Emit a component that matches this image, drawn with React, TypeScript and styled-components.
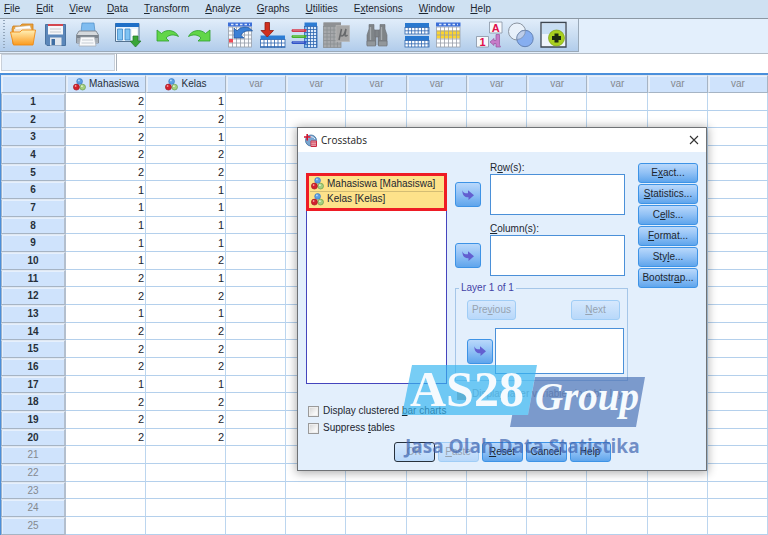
import React from 'react';
import styled, { createGlobalStyle, css } from 'styled-components';

const GlobalStyle = createGlobalStyle`
  *, *::before, *::after { box-sizing: border-box; }
  html, body, #root { height: 100%; }
  body { margin: 0; overflow: hidden; font: 10px/12px "Liberation Sans", Arial, sans-serif; color: #1c2630; }
  button, input { font: inherit; color: inherit; margin: 0; padding: 0; }
`;

/* ---------- shell ---------- */

const Window = styled.div`
  position: relative;
  display: flex;
  flex-direction: column;
  min-height: 100vh;
  background: #fff;
`;

const MenuBar = styled.nav`
  display: flex;
  gap: 16px;
  height: 19px;
  padding: 2px 4px;
  background: #cfe1f2;
  border-bottom: 1px solid #8c98a4;
`;

const MenuItem = styled.button`
  border: 0;
  background: none;
  line-height: 14px;
  white-space: nowrap;
`;

const ToolStrip = styled.div`
  height: 35px;
  display: flex;
  align-items: flex-start;
  background: #e3effc;
  border-bottom: 1px solid #b4bdc7;
`;

const ToolBar = styled.div`
  display: flex;
  align-items: center;
  gap: 14px;
  height: 33px;
  padding: 0 14px 0 3px;
  background: linear-gradient(#e1edfa, #c8dcf1 55%, #b1cceb);
  border-right: 1px solid #9aa9b8;
  border-bottom: 1px solid #9aa9b8;
`;

const Grip = styled.span`
  width: 2px;
  height: 30px;
  margin-right: -9px;
  background: repeating-linear-gradient(#93a6bb 0 1px, transparent 1px 3px);
`;

const ToolGroup = styled.div`
  display: flex;
  gap: 6px;
`;

const ToolButton = styled.button`
  width: 26px;
  height: 26px;
  border: 0;
  background: none;
  svg { display: block; overflow: visible; }
`;

const EditBar = styled.div`
  display: flex;
  height: 21px;
  background: #fff;
  border-bottom: 2px solid #4a8fdb;
`;

const CellName = styled.output`
  width: 114px;
  margin: 0 0 2px 1px;
  background: #e3effc;
  border: 1px solid #c9d0d9;
`;

const CellEditor = styled.input`
  flex: 1;
  min-width: 0;
  margin: 0 0 2px 1px;
  border: 0;
  border-left: 1px solid #a9b1ba;
  background: #fff;
  outline: none;
`;

/* ---------- data sheet ---------- */

const SheetArea = styled.main`
  flex: 1;
  display: flex;
  border-left: 1px solid #4a8fdb;
`;

const Sheet = styled.table`
  flex: 1;
  width: 100%;
  table-layout: fixed;
  border-collapse: separate;
  border-spacing: 0;
`;

const Col = styled.col<{ $w?: number }>`
  ${p => p.$w && css`width: ${p.$w}px;`}
`;

const headCell = css`
  padding: 0;
  background: #cfe3fc;
  border: 1px solid #a6b4c4;
  border-top-color: #e0e8f2;
  box-shadow: inset 1px 1px 0 #e6f0fd;
  white-space: nowrap;
`;

const ColHead = styled.th<{ $named?: boolean }>`
  ${headCell}
  height: 18px;
  border-left: 1px solid #e4ebf4;
  font-weight: 400;
  color: ${p => (p.$named ? '#27303a' : '#85898f')};
`;

const HeadLabel = styled.span`
  display: flex;
  align-items: center;
  justify-content: center;
  gap: 3px;
`;

const RowHead = styled.th<{ $used: boolean }>`
  ${headCell}
  height: 17px;
  border-left-color: #9fb4cc;
  border-right: 2px solid #b3bfce;
  font-weight: ${p => (p.$used ? 700 : 400)};
  color: ${p => (p.$used ? '#27303a' : '#85898f')};
  line-height: 14px;
`;

const Cell = styled.td`
  padding: 0 1px 0 0;
  border-right: 1px solid #bcd6ef;
  border-bottom: 1px solid #b4d0ec;
  text-align: right;
  font-size: 11px;
  line-height: 14px;
`;

/* ---------- dialog ---------- */

const Dialog = styled.section`
  position: absolute;
  left: 297px;
  top: 127px;
  width: 410px;
  border: 1px solid #6f7275;
  background: #e3effc;
  box-shadow: 0 1px 9px 1px rgba(0, 0, 0, 0.32);
`;

const TitleBar = styled.header`
  display: flex;
  align-items: center;
  gap: 4px;
  height: 24px;
  padding: 0 7px 0 6px;
  background: #fff;
`;

const Title = styled.h1`
  flex: 1;
  margin: 0;
  font: 400 10px/14px "Open Sans", "Noto Sans", sans-serif;
  color: #222;
`;

const CloseButton = styled.button`
  width: 10px;
  height: 10px;
  border: 0;
  background: none;
  svg { display: block; }
`;

const DialogBody = styled.div`
  display: flex;
  padding: 10px 8px 0;
`;

const SourceColumn = styled.div`
  width: 142px;
  margin: 11px 8px 0 0;
`;

const SourceList = styled.ul`
  height: 211px;
  margin: 0 0 21px;
  padding: 0;
  list-style: none;
  background: #fff;
  border: 1px solid #4545bd;
`;

const Highlight = styled.li`
  margin: -1px;
  border: 3px solid #ee1c25;
  background: #fde28a;
`;

const Group = styled.ul`
  margin: 0;
  padding: 0 1px 2px;
  list-style: none;
`;

const SourceItem = styled.li`
  display: flex;
  align-items: center;
  gap: 3px;
  height: 15px;
  padding-left: 1px;
  white-space: nowrap;
  & + & { border-top: 1px solid #d3bd74; }
`;

const CheckRow = styled.label<{ $disabled?: boolean }>`
  display: flex;
  align-items: center;
  gap: 4px;
  height: 12px;
  margin: 0 0 5px 2px;
  white-space: nowrap;
  color: ${p => (p.$disabled ? '#97a3b0' : 'inherit')};
`;

const CheckBox = styled.input.attrs({ type: 'checkbox' })`
  appearance: none;
  flex: none;
  width: 11px;
  height: 11px;
  border: 1px solid #9a9a9a;
  background: linear-gradient(135deg, #d2d2d2, #f8f8f8 70%);
  box-shadow: inset 0 0 0 1px #eee;
  &:disabled { background: #a9a49c; border-color: #a5a5a5; box-shadow: none; }
`;

const TargetColumn = styled.div`
  width: 173px;
  margin-right: 10px;
`;

const Target = styled.div`
  display: grid;
  grid-template: 12px 41px / 26px 135px;
  column-gap: 9px;
  align-items: center;
  margin-bottom: 8px;
`;

const TargetLabel = styled.span`
  grid-column: 2;
`;

const DropList = styled.ul`
  align-self: stretch;
  flex: 1;
  margin: 0;
  padding: 0;
  list-style: none;
  background: #fff;
  border: 1px solid #4b90d8;
`;

const PushButton = styled.button<{ $w: number }>`
  width: ${p => p.$w}px;
  height: 20px;
  border: 1px solid #3d93e6;
  border-radius: 3px;
  background: linear-gradient(#b9d8fb, #8fc0f5 50%, #5fa5ec);
  line-height: 12px;
  white-space: nowrap;
  &:disabled {
    border-color: #a0cdf6;
    background: linear-gradient(#d6e8fd, #b8d8fa);
    color: #97a3b0;
  }
`;

const DefaultButton = styled(PushButton)`
  &:disabled { border: 1px solid #27313c; }
`;

const MoveButton = styled.button`
  display: grid;
  place-items: center;
  flex: none;
  width: 26px;
  height: 25px;
  border: 1px solid #3d93e6;
  border-radius: 3px;
  background: linear-gradient(#b9d8fb, #8fc0f5 50%, #5fa5ec);
`;

const Layer = styled.fieldset`
  min-width: 0;
  margin: -2px 0 7px;
  padding: 6px 3px 6px 11px;
  border: 1px solid #a5c6e8;
`;

const Legend = styled.legend`
  margin-left: -8px;
  padding: 0 2px;
  color: #4343a6;
`;

const LayerNav = styled.div`
  display: flex;
  justify-content: space-between;
  margin: 0 4px 8px 0;
`;

const LayerPick = styled.div`
  display: flex;
  align-items: center;
  gap: 2px;
  height: 46px;
`;

const SideButtons = styled.div`
  display: flex;
  flex-direction: column;
  gap: 1px;
  margin-top: 1px;
`;

const Footer = styled.footer`
  display: flex;
  justify-content: center;
  gap: 3px;
  padding: 3px 0 8px;
`;

const Watermark = styled.svg`
  position: absolute;
  left: 100px;
  top: 232px;
  overflow: visible;
  pointer-events: none;
`;

/* ---------- drawings ---------- */

const NominalIcon = () => (
  <svg width="13" height="13" viewBox="0 0 13 13" aria-hidden="true">
    <circle cx="6.6" cy="3.4" r="2.9" fill="#5c9fe2" stroke="#3576bd" strokeWidth=".6" />
    <circle cx="9.6" cy="9.1" r="2.9" fill="#a5cf80" stroke="#5d9443" strokeWidth=".6" />
    <circle cx="3.4" cy="9.1" r="3" fill="#d3202e" stroke="#981820" strokeWidth=".6" />
    <circle cx="2.6" cy="8" r=".9" fill="#f49a9c" />
    <circle cx="5.9" cy="2.4" r=".9" fill="#bcdcfa" />
    <circle cx="8.9" cy="8.2" r=".9" fill="#e0f4d0" />
  </svg>
);

const MoveArrow = () => (
  <svg width="14" height="14" viewBox="0 0 14 14" aria-hidden="true">
    <path d="M1.5 2.2C2 5 4 5.3 7 5.2V2.3L13 7.3L7.5 12V9.3C3.6 9.4 1 7 1.5 2.2Z" fill="#635fd0" />
  </svg>
);

const FolderIcon = () => (
  <g>
    <path d="M2 7L3 4H10L12 2H23V8L20 22H3Z" fill="#e9a23b" stroke="#cf7f1c" strokeWidth=".8" />
    <path d="M5 5L20 3.5L22 9H5Z" fill="#fff" stroke="#c0a780" strokeWidth=".5" />
    <path d="M4 7L21 6V12H4Z" fill="#f0e4d0" />
    <path d="M.5 10H10L12 8H25.5L23 23H3.5Z" fill="url(#folder)" stroke="#ee8a14" strokeWidth=".9" />
  </g>
);

const SaveIcon = () => (
  <g>
    <path d="M3.5 2.5H23.5V23.5H5L3.5 22Z" fill="#5b87ba" stroke="#4a729f" />
    <path d="M6 2.5H21V12.5H6Z" fill="#f5f7fa" />
    <path d="M6 2H21V4H6Z" fill="#d3474f" />
    <path d="M8 7H19M8 10H19" stroke="#c5cad0" />
    <path d="M8 15.5H19.5V23.5H8Z" fill="#e2e7ed" />
    <path d="M9.5 17H13V23H9.5Z" fill="#3f6ea3" />
  </g>
);

const PrintIcon = () => (
  <g>
    <path d="M8 1H20L21 10H7Z" fill="#7fbcf0" stroke="#4e8cc4" strokeWidth=".7" />
    <path d="M5 9H22L24.5 13V21H2.5V13Z" fill="#d5d9dd" stroke="#7d858e" strokeWidth=".9" />
    <path d="M3 13H24V16H3Z" fill="#7c848d" />
    <path d="M3 16H24V20H3Z" fill="#a6adb5" />
    <path d="M6.5 15H20.5L22 24H5Z" fill="#f8f9fb" stroke="#a0a8b0" strokeWidth=".7" />
    <path d="M8 18H19M7.5 21H19.5" stroke="#c5cbd2" />
  </g>
);

const RecallIcon = () => (
  <g>
    <path d="M1.5 1.5H25V19.5H1.5Z" fill="#e9f3fd" stroke="#54718f" />
    <path d="M1.5 1H25V5H1.5Z" fill="#1f6fc7" />
    <path d="M3.5 7H8.500V18H3.500ZM11 7H16V18H11Z" fill="#7fc3f3" stroke="#3d86c4" strokeWidth=".8" />
    <path d="M18 7H23V14H18Z" fill="#fff" />
    <path d="M19 14H24V19H27L21.5 25L16 19H19Z" fill="#3aa537" stroke="#23782a" strokeWidth=".7" />
  </g>
);

const UndoIcon = () => (
  <path d="M3 8V19H15L12 16C15 12.5 20 12 24.5 14.5C21.5 8 12.5 6.500 7.500 11.500Z" fill="#62d649" stroke="#2f9e2f" strokeWidth=".8" strokeLinejoin="round" />
);

const RedoIcon = () => (
  <path d="M24 8V19H12L15 16C12 12.5 7 12 2.5 14.5C5.500 8 14.500 6.500 19.500 11.500Z" fill="#62d649" stroke="#2f9e2f" strokeWidth=".8" strokeLinejoin="round" />
);

const GridLines = ({ x, y, w, h, s, c }: { x: number; y: number; w: number; h: number; s: number; c: string }) => (
  <g stroke={c} strokeWidth=".8">
    <rect x={x} y={y} width={w} height={h} fill="none" />
    {Array.from({ length: Math.ceil(w / s) - 1 }, (_, i) => (
      <path key={`v${i}`} d={`M${x + (i + 1) * s} ${y}V${y + h}`} />
    ))}
    {Array.from({ length: Math.ceil(h / s) - 1 }, (_, i) => (
      <path key={`h${i}`} d={`M${x} ${y + (i + 1) * s}H${x + w}`} />
    ))}
  </g>
);

const GoCaseIcon = () => (
  <g>
    <path d="M2.5 1H25.5V25H2.5Z" fill="#fbfcfe" />
    <GridLines x={2.5} y={5} w={23} h={20} s={4} c="#969da9" />
    <path d="M2 .5H26V4.5H2Z" fill="#3c6fd8" />
    <path d="M5 2.500H24" stroke="#dbe8fb" strokeWidth="1.500" strokeDasharray="2.500 2" />
    <path d="M3 17H7V20.500H3Z" fill="#f04a55" />
    <path d="M8 6V16H18L15 13.500C16.500 9.500 21 8 26.500 9C23 3.500 14.500 4 11 9Z" fill="#3a7fd5" stroke="#1c519c" strokeWidth=".7" strokeLinejoin="round" />
  </g>
);

const GoVarIcon = () => (
  <g>
    <path d="M2.500 14H27V25.500H2.500Z" fill="#fff" />
    <path d="M2.500 13.500H27V17.500H2.500Z" fill="#2c7cd4" />
    <GridLines x={2.500} y={17.500} w={24.500} h={8} s={3.500} c="#2d66b0" />
    <path d="M7 .5H11.500V8.500H15.500L9.300 15L3 8.500H7Z" fill="#d0301f" stroke="#8f1c12" strokeWidth=".8" />
  </g>
);

const VariablesIcon = () => (
  <g>
    <path d="M14.500 .5H27V25.500H14.500Z" fill="#dceafa" />
    <path d="M14.500 .5H27V4.500H14.500Z" fill="#2c7cd4" />
    <path d="M14.500 4.500H18V25.500H14.500Z" fill="#88bdf0" />
    <GridLines x={14.500} y={4.500} w={12.500} h={21} s={3} c="#2d66b0" />
    <g strokeWidth="3" strokeLinecap="round">
      <path d="M3 8.500H15" stroke="#cf3a50" />
      <path d="M3 14.500H15" stroke="#46b22c" />
      <path d="M3 20.500H15" stroke="#3154c8" />
    </g>
    <g stroke="#fff" strokeOpacity=".55" strokeWidth=".8">
      <path d="M3 8H14M3 14H14M3 20H14" />
    </g>
  </g>
);

const StatsIcon = () => (
  <g>
    <path d="M1.500 .5H19V25.500H1.500Z" fill="#a6a8ab" />
    <path d="M1.500 .5H19V4.500H1.500Z" fill="#8f9194" />
    <GridLines x={1.500} y={4.500} w={17.500} h={21} s={3.500} c="#8c8f92" />
    <path d="M14 3.500H27.500V19.500H14Z" fill="#a6a6a6" stroke="#b8b8b8" strokeWidth=".7" />
    <path d="M19.500 7L17 18M19.500 7C18 13 18.500 14 20 14C22 14 23 10.500 24 7L23 12.500C23 14.500 24 14.500 25.500 13" fill="none" stroke="#66686a" strokeWidth="1.500" />
  </g>
);

const FindIcon = () => (
  <g fill="#7f8488" stroke="#6c7175" strokeWidth=".6">
    <path d="M7 2.500H12V7L14 10V23H5V13L7 7Z" />
    <path d="M18 2.500H23V7L25 13V23H16V10L18 7Z" />
    <path d="M13 8H17V15H13Z" />
    <path d="M5 19H13.500V24H5ZM16.500 19H25V24H16.500Z" fill="#92979b" />
    <path d="M8.500 5V18M19.500 5V18" stroke="#a6abaf" strokeWidth="1.300" />
  </g>
);

const SplitIcon = () => (
  <g>
    {[1, 14].map(y => (
      <g key={y}>
        <path d={`M3 ${y}H27V${y + 11}H3Z`} fill="#fff" />
        <path d={`M3 ${y}H27V${y + 4.5}H3Z`} fill="#2878cf" />
        <GridLines x={3} y={y + 4.5} w={24} h={6.5} s={3.3} c="#2d66b0" />
      </g>
    ))}
  </g>
);

const SelectIcon = () => (
  <g>
    <path d="M2.500 1H26V25H2.500Z" fill="#fff" />
    <path d="M2.500 8.500H26V16.500H2.500Z" fill="#fbd42f" />
    <GridLines x={2.500} y={5} w={23.500} h={20} s={4} c="#9aa0aa" />
    <path d="M2 .5H26.500V4.500H2Z" fill="#3c6fd8" />
    <path d="M5 2.500H24" stroke="#dbe8fb" strokeWidth="1.500" strokeDasharray="2.500 2" />
  </g>
);

const tile = { fontFamily: '"Liberation Sans", sans-serif', fontWeight: 700, fontSize: 11, fill: '#e0104c', textAnchor: 'middle' as const };

const LabelsIcon = () => (
  <g>
    <path d="M15.500 0H28V11H15.500Z" fill="#f7f9fc" stroke="#8793a3" strokeWidth=".8" />
    <text x="21.800" y="9.500" {...tile}>A</text>
    <path d="M2.500 14.500H14.500V25H2.500Z" fill="#f7f9fc" stroke="#8793a3" strokeWidth=".8" />
    <text x="8.500" y="24" {...tile}>1</text>
    <path d="M22 12.500H25.500V22.500C25.500 24 26.500 24 26.500 25H22V21.500H20V23.500L16 20L20 16.500V18.500H22Z" fill="#c77cc9" stroke="#9a549c" strokeWidth=".7" />
  </g>
);

const SetsIcon = () => (
  <g>
    <circle cx="11" cy="9.500" r="8.500" fill="#eef4fb" fillOpacity=".8" stroke="#8b95a1" />
    <circle cx="19" cy="16.500" r="8.200" fill="#86aef0" stroke="#6382b5" />
    <path d="M10.800 17.500A8.200 8.200 0 0 1 19.300 8.400A8.500 8.500 0 0 1 10.800 17.500Z" fill="#bccdea" stroke="#7b8ca6" strokeWidth=".7" />
  </g>
);

const CustomIcon = () => (
  <g>
    <path d="M3 .5H28V25H3Z" fill="#eef4fb" stroke="#3c4650" strokeWidth="1.300" />
    <path d="M4 1.500H27V12H4Z" fill="#c8def3" />
    <circle cx="18.500" cy="16" r="8" fill="#a8cf1f" stroke="#7d9f18" strokeWidth=".7" />
    <path d="M16.500 11.500H20.500V14H23V18H20.500V20.500H16.500V18H14V14H16.500Z" fill="#1d2a12" />
  </g>
);

const AppIcon = () => (
  <svg width="13" height="13" viewBox="0 0 13 13" aria-hidden="true">
    <circle cx="7" cy="6.500" r="5.500" fill="#7aa5cf" stroke="#41719f" strokeWidth=".8" />
    <path d="M4 4Q8 1 11 5" stroke="#e5f0fa" fill="none" />
    <path d="M7 7H12.500V12.500H7Z" fill="#fff" stroke="#cb2a42" />
    <path d="M7 8.800H12.500M7 10.800H12.500M9 7V12.500M11 7V12.500" stroke="#cb2a42" strokeWidth=".7" />
    <path d="M0 3H6.500M3.200 0V6.500" stroke="#d0152f" strokeWidth="1.600" />
  </svg>
);

/* ---------- content ---------- */

const menus: [string, number][] = [
  ['File', 0], ['Edit', 0], ['View', 0], ['Data', 0], ['Transform', 0], ['Analyze', 0],
  ['Graphs', 0], ['Utilities', 0], ['Extensions', 1], ['Window', 0], ['Help', 0],
];

const tools: [string, () => React.JSX.Element][][] = [
  [['Open', FolderIcon], ['Save', SaveIcon], ['Print', PrintIcon]],
  [['Recall dialogs', RecallIcon]],
  [['Undo', UndoIcon], ['Redo', RedoIcon]],
  [['Go to case', GoCaseIcon], ['Go to variable', GoVarIcon], ['Variables', VariablesIcon], ['Statistics', StatsIcon]],
  [['Find', FindIcon]],
  [['Split file', SplitIcon], ['Select cases', SelectIcon]],
  [['Value labels', LabelsIcon], ['Variable sets', SetsIcon], ['Customize', CustomIcon]],
];

const data = [
  [2, 1], [2, 2], [2, 1], [2, 2], [2, 2], [1, 1], [1, 1], [1, 1], [1, 1], [1, 2],
  [2, 1], [2, 2], [1, 1], [2, 2], [2, 2], [2, 2], [1, 1], [2, 2], [2, 2], [2, 2],
];

const EMPTY_COLUMNS = 9;
const VISIBLE_ROWS = 25;
const blanks = Array.from({ length: EMPTY_COLUMNS }, (_, i) => i);

const sideActions: [string, number][] = [
  ['Exact...', 1], ['Statistics...', 0], ['Cells...', 1], ['Format...', 0], ['Style...', 3], ['Bootstrap...', 7],
];

const Mnemonic = ({ text, at }: { text: string; at: number }) => (
  <>{text.slice(0, at)}<u>{text[at]}</u>{text.slice(at + 1)}</>
);

const TargetField = ({ id, label, at }: { id: string; label: string; at: number }) => (
  <Target>
    <TargetLabel id={id}><Mnemonic text={label} at={at} /></TargetLabel>
    <MoveButton aria-label={`Move to ${label}`}><MoveArrow /></MoveButton>
    <DropList role="listbox" aria-labelledby={id} />
  </Target>
);

const CrosstabsDialog = () => (
  <Dialog role="dialog" aria-labelledby="dialog-title">
    <TitleBar>
      <AppIcon />
      <Title id="dialog-title">Crosstabs</Title>
      <CloseButton aria-label="Close">
        <svg width="10" height="10" viewBox="0 0 10 10"><path d="M1 1L9 9M9 1L1 9" stroke="#333" strokeWidth="1.100" /></svg>
      </CloseButton>
    </TitleBar>
    <DialogBody>
      <SourceColumn>
        <SourceList>
          <Highlight>
            <Group role="listbox" aria-label="Variables">
              <SourceItem role="option" aria-selected="true"><NominalIcon />Mahasiswa [Mahasiswa]</SourceItem>
              <SourceItem role="option" aria-selected="true"><NominalIcon />Kelas [Kelas]</SourceItem>
            </Group>
          </Highlight>
        </SourceList>
        <CheckRow><CheckBox /><span><Mnemonic text="Display clustered bar charts" at={18} /></span></CheckRow>
        <CheckRow><CheckBox /><span><Mnemonic text="Suppress tables" at={9} /></span></CheckRow>
      </SourceColumn>
      <TargetColumn>
        <TargetField id="rows" label="Row(s):" at={1} />
        <TargetField id="columns" label="Column(s):" at={0} />
        <Layer>
          <Legend>Layer 1 of 1</Legend>
          <LayerNav>
            <PushButton $w={49} disabled><Mnemonic text="Previous" at={3} /></PushButton>
            <PushButton $w={49} disabled><Mnemonic text="Next" at={0} /></PushButton>
          </LayerNav>
          <LayerPick>
            <MoveButton aria-label="Move to layer"><MoveArrow /></MoveButton>
            <DropList role="listbox" aria-label="Layer 1 of 1" />
          </LayerPick>
        </Layer>
        <CheckRow $disabled><CheckBox disabled /><span>Display layer variables in table layers</span></CheckRow>
      </TargetColumn>
      <SideButtons>
        {sideActions.map(([text, at]) => (
          <PushButton key={text} $w={60}><Mnemonic text={text} at={at} /></PushButton>
        ))}
      </SideButtons>
    </DialogBody>
    <Footer>
      <DefaultButton $w={41} disabled>OK</DefaultButton>
      <PushButton $w={41} disabled><Mnemonic text="Paste" at={0} /></PushButton>
      <PushButton $w={41}><Mnemonic text="Reset" at={0} /></PushButton>
      <PushButton $w={41}>Cancel</PushButton>
      <PushButton $w={41}>Help</PushButton>
    </Footer>
    <Watermark width="250" height="100" viewBox="0 0 250 100">
      <path d="M14 5H139L130 55H4Z" fill="#36b5f0" fillOpacity=".68" />
      <path d="M137 17H247L238 67H112L114.200 55H130Z" fill="#3c66ae" fillOpacity=".62" />
      <text x="12" y="46" fontFamily='"Liberation Serif", serif' fontWeight="700" fontSize="50" fill="#f5fafe">AS28</text>
      <text x="137" y="50" fontFamily='"Liberation Serif", serif' fontWeight="700" fontStyle="italic" fontSize="39" fill="#f5fafe">Group</text>
      <text x="7" y="93" fontFamily='"Open Sans", sans-serif' fontWeight="700" fontSize="19" fill="#3c62ae" fillOpacity=".7">Jasa Olah Data Statistika</text>
    </Watermark>
  </Dialog>
);

export default function App() {
  return (
    <>
      <GlobalStyle />
      <Window>
        <MenuBar aria-label="Main menu">
          {menus.map(([text, at]) => (
            <MenuItem key={text}><Mnemonic text={text} at={at} /></MenuItem>
          ))}
        </MenuBar>
        <ToolStrip>
          <ToolBar role="toolbar" aria-label="Tools">
            <Grip />
            {tools.map(group => (
              <ToolGroup key={group[0][0]}>
                {group.map(([name, Icon]) => (
                  <ToolButton key={name} aria-label={name}>
                    <svg width="26" height="26" viewBox="0 0 26 26">
                      <defs>
                        <linearGradient id="folder" x1="0" y1="0" x2="0" y2="1">
                          <stop offset="0" stopColor="#fff1b8" />
                          <stop offset="1" stopColor="#fb9a1e" />
                        </linearGradient>
                      </defs>
                      <Icon />
                    </svg>
                  </ToolButton>
                ))}
              </ToolGroup>
            ))}
          </ToolBar>
        </ToolStrip>
        <EditBar>
          <CellName aria-label="Cell" />
          <CellEditor aria-label="Cell value" />
        </EditBar>
        <SheetArea>
          <Sheet>
            <colgroup>
              <Col $w={65} />
              <Col $w={80} />
              <Col $w={80} />
              {blanks.map(i => <Col key={i} />)}
            </colgroup>
            <thead>
              <tr>
                <ColHead as="td" />
                <ColHead $named><HeadLabel><NominalIcon />Mahasiswa</HeadLabel></ColHead>
                <ColHead $named><HeadLabel><NominalIcon />Kelas</HeadLabel></ColHead>
                {blanks.map(i => <ColHead key={i}>var</ColHead>)}
              </tr>
            </thead>
            <tbody>
              {Array.from({ length: VISIBLE_ROWS }, (_, r) => (
                <tr key={r}>
                  <RowHead scope="row" $used={r < data.length}>{r + 1}</RowHead>
                  <Cell>{data[r]?.[0]}</Cell>
                  <Cell>{data[r]?.[1]}</Cell>
                  {blanks.map(i => <Cell key={i} />)}
                </tr>
              ))}
            </tbody>
          </Sheet>
        </SheetArea>
        <CrosstabsDialog />
      </Window>
    </>
  );
}
